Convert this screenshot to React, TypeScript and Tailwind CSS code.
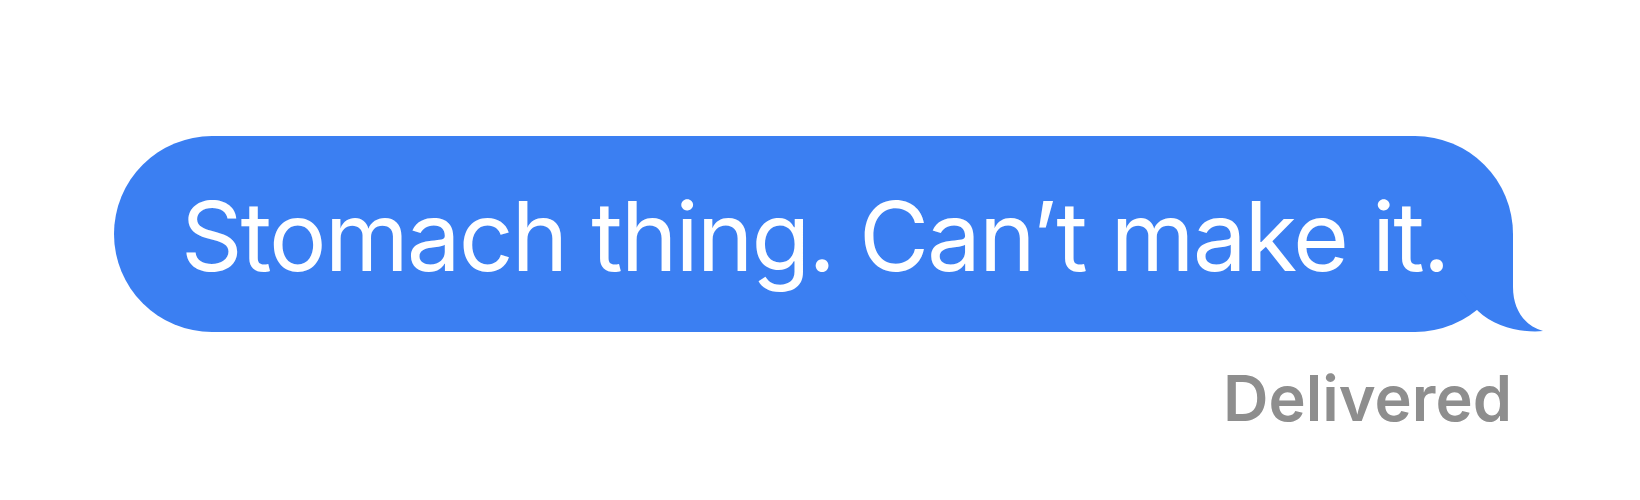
export default function App() {
  return (
    <div className="w-[1640px] h-[500px] bg-white" style={{ fontFamily: "Inter, 'Liberation Sans', sans-serif" }}>
      <div className="flex flex-col items-start pt-[136px] pl-[114px]">
        <div className="relative flex h-[196px] w-[1399px] items-center rounded-full bg-[#3b7ff2] pl-[67px] pt-[3px]">
          {/* tail */}
          <svg
            className="absolute right-[-32px] bottom-[-1px]"
            width="85"
            height="99"
            viewBox="0 0 85 99"
          >
            <path d="M0 0 L53 0 L53 53 C53 76 65 92 83 97 C65 99 35 94 18 77 L0 56 Z" fill="#3b7ff2" />
          </svg>
          <span className="relative text-[96px] leading-none text-white tracking-[-2px]">Stomach thing. Can’t make it.</span>
        </div>
        <div className="mt-[35px] w-[1398px] text-right text-[63px] font-semibold leading-none text-[#8e8e8e]">
          Delivered
        </div>
      </div>
    </div>
  );
}
